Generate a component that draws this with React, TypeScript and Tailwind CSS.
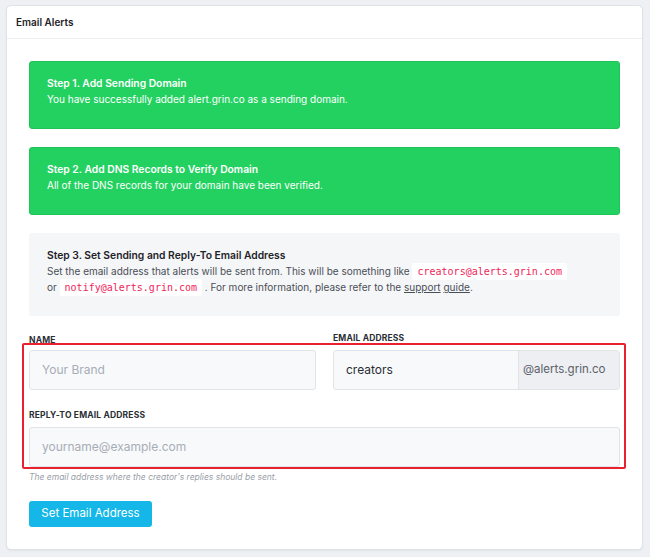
import React from "react";

export default function App() {
  const mono = { fontFamily: "'DejaVu Sans Mono', 'Liberation Mono', monospace", fontSize: "10px" };
  return (
    <div
      className="min-h-[557px] w-[650px] bg-[#eef0f3] pt-[5px] pl-[6px] pr-[7px] pb-[6px]"
      style={{ fontFamily: "Inter, 'Noto Sans', sans-serif" }}
    >
      <div className="rounded-[5px] border border-[#dfe2e6] bg-white shadow-[0_1px_2px_rgba(0,0,0,0.06)]">
        <div className="flex h-[33px] items-center border-b border-[#eceef1] pl-[9px] text-[10px] font-semibold text-[#1f2329]">
          Email Alerts
        </div>
        <div className="px-[22px] pt-[22px] pb-[22px]">
          <div className="rounded-[3px] border border-[#1fc358] bg-[#23d160] pl-[17px] pr-4 pt-[13px] pb-[21px] text-[10px] leading-[16px] text-white">
            <div className="text-[10.3px] font-semibold">Step 1. Add Sending Domain</div>
            <div>You have successfully added alert.grin.co as a sending domain.</div>
          </div>
          <div className="mt-[18px] rounded-[3px] border border-[#1fc358] bg-[#23d160] pl-[17px] pr-4 pt-[13px] pb-[21px] text-[10px] leading-[16px] text-white">
            <div className="text-[10.3px] font-semibold">Step 2. Add DNS Records to Verify Domain</div>
            <div>All of the DNS records for your domain have been verified.</div>
          </div>
          <div className="mt-[18px] rounded-[3px] bg-[#f5f6f8] pl-[18px] pr-4 pt-[14px] pb-[21px] text-[10px] leading-[16px] text-[#4a4f57]">
            <div className="text-[10.3px] font-semibold text-[#1f2329]">Step 3. Set Sending and Reply-To Email Address</div>
            <div className="h-[16px]">
              Set the email address that alerts will be sent from. This will be something like{" "}
              <code className="rounded-[2px] bg-white px-[5px] py-[3px] leading-none text-[#f0255a]" style={mono}>
                creators@alerts.grin.com
              </code>
            </div>
            <div className="h-[16px]">
              or{" "}
              <code className="rounded-[2px] bg-white px-[5px] py-[3px] leading-none text-[#f0255a]" style={mono}>
                notify@alerts.grin.com
              </code>{" "}
              . For more information, please refer to the <span className="underline">support</span>{" "}
              <span className="underline">guide</span>.
            </div>
          </div>

          <div className="relative mt-[16px]">
            <div className="grid grid-cols-2 gap-[17px]">
              <div>
                <div className="pt-[2px] text-[8.5px] font-bold uppercase leading-[12px] tracking-[0.02em] text-[#2a2e35]">
                  Name
                </div>
                <div className="mt-[4px] flex h-[40px] items-center rounded-[3px] border border-[#e1e4e8] bg-[#f8f9fb] px-3 text-[12px] text-[#a7adb6]">
                  Your Brand
                </div>
              </div>
              <div>
                <div className="text-[8.5px] font-bold uppercase leading-[12px] tracking-[0.02em] text-[#2a2e35]">
                  Email Address
                </div>
                <div className="mt-[6px] flex h-[40px] overflow-hidden rounded-[3px] border border-[#e1e4e8] bg-[#f8f9fb]">
                  <div className="flex flex-1 items-center px-3 text-[12px] text-[#2a2e35]">creators</div>
                  <div className="flex w-[101px] items-center border-l border-[#e1e4e8] bg-[#eeeff2] pl-[4px] text-[11.5px] text-[#5b616b]">
                    @alerts.grin.co
                  </div>
                </div>
              </div>
            </div>
            <div className="mt-[19px] text-[8.5px] font-bold uppercase leading-[12px] tracking-[0.02em] text-[#2a2e35]">
              Reply-To Email Address
            </div>
            <div className="mt-[6px] flex h-[40px] items-center rounded-[3px] border border-[#e1e4e8] bg-[#f8f9fb] px-3 text-[12px] text-[#a7adb6]">
              yourname@example.com
            </div>
            <div className="mt-[4px] text-[8.5px] italic leading-[12px] text-[#9aa0a8]">
              The email address where the creator's replies should be sent.
            </div>
            <div className="pointer-events-none absolute left-[-7px] right-[-6px] top-[11px] h-[126px] rounded-[2px] border-2 border-[#e8202f]" />
            <button className="mt-[18px] h-[26px] w-[123px] rounded-[3px] bg-[#14b7e8] text-[11.5px] text-white">
              Set Email Address
            </button>
          </div>
        </div>
      </div>
    </div>
  );
}
